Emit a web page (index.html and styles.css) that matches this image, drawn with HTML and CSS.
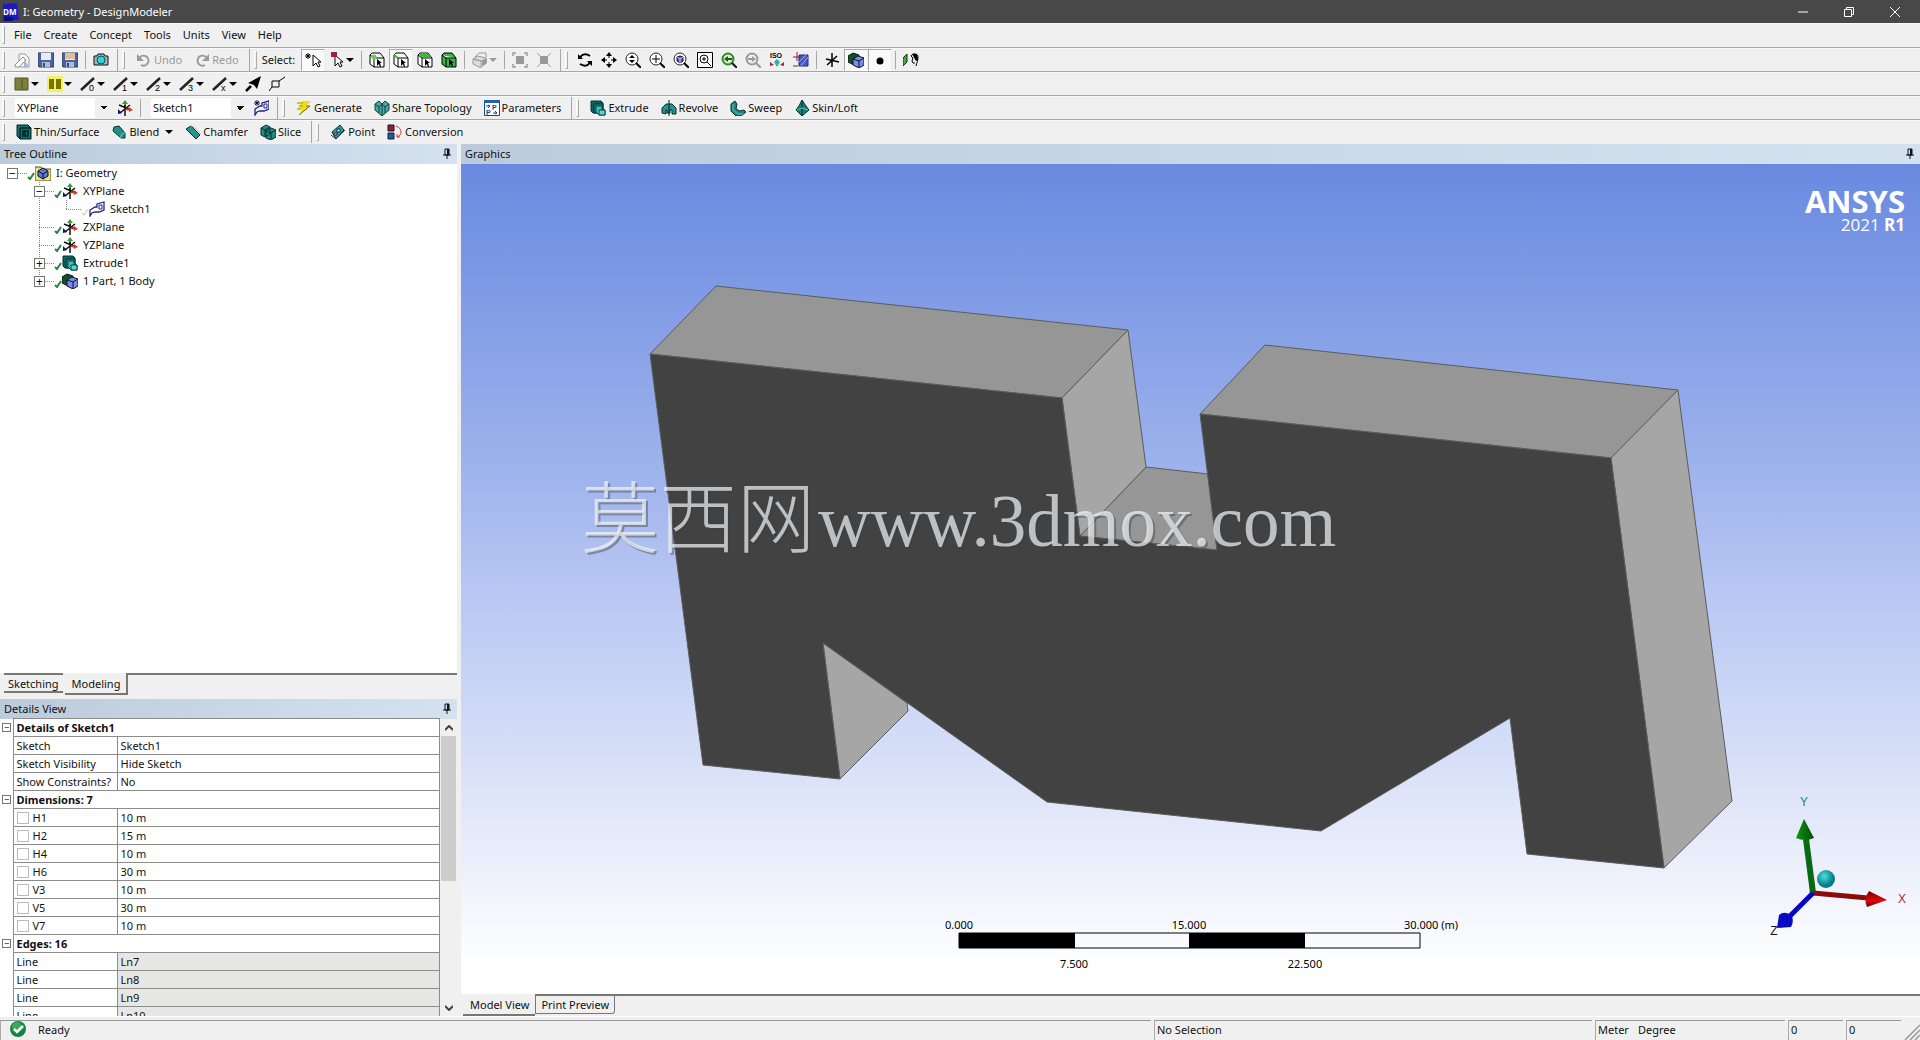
FILE: index.html
```html
<!DOCTYPE html>
<html lang="en">
<head>
<meta charset="utf-8">
<title>I: Geometry - DesignModeler</title>
<link rel="stylesheet" href="styles.css">
</head>
<body>
<svg class="defs" aria-hidden="true">
  <defs>
    <symbol id="arrow" viewBox="0 0 8 4"><path d="M0 0h8L4 4z"/></symbol>
    <symbol id="cursor" viewBox="0 0 16 16"><path d="M6 3v11l3-3 2 4 2-1-2-4h3z" fill="#fff" stroke="#000"/></symbol>
    <symbol id="cube" viewBox="0 0 16 16"><path d="M1 3l4 3h10v9H5l-4-3V3l2-2h8l4 5M5 6v9" stroke="#000"/><path d="M8 7v7l2-2 1 3 1-1-1-3h2z" fill="#000"/></symbol>
    <symbol id="lens" viewBox="0 0 16 16"><circle cx="7" cy="7" r="6" fill="#fff" stroke="#222"/><path d="M11 11l5 5" stroke="#000" stroke-width="2"/></symbol>
    <symbol id="axes" viewBox="0 0 16 16"><path d="M8 8V2" stroke="#2d9a3a" stroke-width="2"/><path d="M8 5v11M2 5l12 5M3 13L13 5" stroke="#111" stroke-width="1.5"/><path d="M9 9l5 1" stroke="#c33" stroke-width="2"/><path d="M8 0l3 4H5z" fill="#3a9c3a"/><path d="M12 7l4 3-4 2z" fill="#c43"/><path d="M1 14V9l4 4z" fill="#116"/></symbol>
    <symbol id="sketch" viewBox="0 0 16 16"><path d="M1 15V9l5-3h2V3l7-2v8l-5 2H6l-3 1z" fill="none" stroke="#22228a" stroke-width="1.3"/><path d="M10 4h3v4h-3z" fill="none" stroke="#22228a"/></symbol>
    <symbol id="extrude" viewBox="0 0 16 16"><path d="M1 1h10l2 2v10H3l-2-2z" fill="#0d6563" stroke="#033"/><path d="M4 4h9v9H4z" fill="#1b8583" stroke="#033"/><path d="M6 6h6v4h3v5H9l-3-3z" fill="#48c1bd" stroke="#044"/><path d="M9 10h6v5H9z" fill="#5fd6d2" stroke="#044"/></symbol>
    <symbol id="body" viewBox="0 0 16 16"><path d="M0 4l5-3 6 2v8l-5 2-6-3z" fill="#174f25" stroke="#021"/><path d="M5 7l5-3 6 2v7l-5 3-6-3z" fill="#7b8de0" stroke="#114"/><path d="M5 7l6 2 5-3M11 9v7" stroke="#114" fill="none"/></symbol>
    <symbol id="check" viewBox="0 0 8 8"><path d="M1 5l2 2 4-6" fill="none" stroke-width="2"/></symbol>
    <symbol id="pin" viewBox="0 0 8 12"><path d="M2 1h4v6H2zM0 7h8M4 7v4" fill="none" stroke="#111"/><path d="M5 1v6" stroke="#111" stroke-width="2"/></symbol>
    <symbol id="line" viewBox="0 0 16 16"><path d="M1 14L14 2" stroke="#222" stroke-width="2.5"/></symbol>
    <symbol id="disk" viewBox="0 0 16 16"><path d="M0 1h16v14H1l-1-2z" fill="#4a639e" stroke="#2b3d6b"/><path d="M3 1h10v7H3z" fill="#e8edf5"/><path d="M4 10h8v5H4z" fill="#aebdd3"/><path d="M5 11h2v4H5z" fill="#334c83"/></symbol>
  </defs>
</svg>

<header class="titlebar">
  <svg class="app-logo" viewBox="0 0 18 18"><path d="M2 1l14-1 2 17-16 1z" fill="#1b1bc4"/><path d="M4 13l9 2-2 3H3z" fill="#0b0b78"/><text x="2" y="12" class="logo-text">DM</text></svg>
  <h1>I: Geometry - DesignModeler</h1>
  <div class="window-buttons">
    <button aria-label="Minimize"><svg viewBox="0 0 10 10"><path d="M0 5h10" stroke="#fff"/></svg></button>
    <button aria-label="Restore"><svg viewBox="0 0 10 10"><path d="M.5 2.500h7v7h-7zM2.500 2.500v-2h7v7h-2" fill="none" stroke="#fff"/></svg></button>
    <button aria-label="Close"><svg viewBox="0 0 10 10"><path d="M0 0l10 10M10 0L0 10" stroke="#fff"/></svg></button>
  </div>
</header>

<nav class="bar menu"><span class="grip"></span>
  <button>File</button><button>Create</button><button>Concept</button><button>Tools</button><button>Units</button><button>View</button><button>Help</button>
</nav>

<div class="bar"><span class="grip"></span>
  <button class="tool" aria-label="Open"><svg viewBox="0 0 16 16"><path d="M5 2h6l4 4v9H5z" fill="#f5f7fa" stroke="#999"/><path d="M1 13l8-8 3 3-7 7H1z" fill="#fff" stroke="#8791a3"/><path d="M10 7l5 8h-5z" fill="#a9b7cb"/></svg></button>
  <button class="tool" aria-label="Save"><svg><use href="#disk"/></svg></button>
  <button class="tool" aria-label="Save as"><svg viewBox="0 0 16 16"><use href="#disk" width="16" height="16"/><path d="M3 2h10M3 4h10M3 6h10" stroke="#e08a3a"/></svg></button>
  <span class="sep"></span>
  <button class="tool" aria-label="Image capture"><svg viewBox="0 0 16 16"><path d="M1 4h3l1-2h6l1 2h3v9H1z" fill="#9fb5b7" stroke="#111"/><circle cx="8" cy="8" r="4" fill="#2ed3db" stroke="#055"/></svg></button>
  <span class="end"></span><span class="grip"></span>
  <button class="tool text" disabled><svg viewBox="0 0 16 16"><path d="M4 5a5 5 0 1 1 1 8" fill="none" stroke="#999" stroke-width="2"/><path d="M1 2v7h7z" fill="#999"/></svg>Undo</button>
  <button class="tool text" disabled><svg viewBox="0 0 16 16"><path d="M12 5a5 5 0 1 0-1 8" fill="none" stroke="#999" stroke-width="2"/><path d="M15 2v7H8z" fill="#999"/></svg>Redo</button>
  <span class="end"></span><span class="grip"></span>
  <span class="caption">Select:</span>
  <button class="tool on" aria-label="New selection"><svg viewBox="0 0 16 16"><path d="M3 1v6M0 4h6M1 2l4 4M5 2L1 6" stroke="#000"/><use href="#cursor" x="2" width="16" height="16"/></svg></button>
  <button class="tool drop" aria-label="Select mode"><svg viewBox="0 0 16 16"><use href="#cursor" width="16" height="16"/><path d="M2 0h6v5H2z" fill="#a01f3c"/></svg><svg class="arrow"><use href="#arrow"/></svg></button>
  <span class="sep"></span>
  <button class="tool" aria-label="Vertices"><svg viewBox="0 0 16 16" fill="#fff"><use href="#cube" width="16" height="16"/><circle cx="5" cy="5" r="2.500" fill="#6c5"/></svg></button>
  <button class="tool on" aria-label="Edges"><svg viewBox="0 0 16 16" fill="#fff"><use href="#cube" width="16" height="16"/><path d="M1 3l4 3" stroke="#3b3" stroke-width="2"/></svg></button>
  <button class="tool" aria-label="Faces"><svg fill="#fff" viewBox="0 0 16 16"><use href="#cube" width="16" height="16"/><path d="M3 2h8l3 3H5L2 3z" fill="#3b3"/></svg></button>
  <button class="tool" aria-label="Bodies"><svg fill="#38b648"><use href="#cube"/></svg></button>
  <span class="sep"></span>
  <button class="tool drop" aria-label="Extend selection" disabled><svg viewBox="0 0 16 16"><path d="M1 7l5-3 8 2-4 3zM1 7v5l8 4V9z" fill="#ddd" stroke="#999"/><path d="M10 9l5-3v5l-5 4z" fill="#999"/><path d="M3 5l4-4h7v4" fill="none" stroke="#999"/></svg><svg class="arrow"><use href="#arrow"/></svg></button>
  <span class="sep"></span>
  <button class="tool" aria-label="Expand" disabled><svg viewBox="0 0 16 16"><path d="M4 4h8v8H4z" fill="#999"/><path d="M1 4V1h3M12 1h3v3M15 12v3h-3M4 15H1v-3" stroke="#999" fill="none" stroke-width="1.500"/></svg></button>
  <button class="tool" aria-label="Shrink" disabled><svg viewBox="0 0 16 16"><path d="M4 4h8v8H4z" fill="#999"/><path d="M1 1l14 14M15 1L1 15" stroke="#999"/></svg></button>
  <span class="end"></span><span class="grip"></span>
  <button class="tool" aria-label="Rotate"><svg viewBox="0 0 16 16" fill="none"><path d="M3 6c2-5 7-4 10-2M13 10c-2 5-7 4-10 2" stroke="#000" stroke-width="2"/><path d="M1 2v5h5zM15 14V9h-5z" fill="#000"/></svg></button>
  <button class="tool" aria-label="Pan"><svg viewBox="0 0 16 16"><path d="M8 2v4M8 10v4M2 8h4M10 8h4" stroke="#000"/><path d="M8 0l3 4H5zM8 16l3-4H5zM0 8l4-3v6zM16 8l-4-3v6z"/></svg></button>
  <button class="tool" aria-label="Zoom"><svg viewBox="0 0 16 16"><use href="#lens" width="16" height="16"/><path d="M7 3l3 3H4zM7 11l3-3H4z"/></svg></button>
  <button class="tool" aria-label="Zoom in"><svg viewBox="0 0 16 16"><use href="#lens" width="16" height="16"/><path d="M7 3v8M3 7h8" stroke="#000"/></svg></button>
  <button class="tool" aria-label="Zoom to body"><svg viewBox="0 0 16 16"><use href="#lens" width="16" height="16"/><path d="M4 5l3-1 3 1v4l-3 2-3-2z" fill="#55a" stroke="#114"/><path d="M4 5l3 2 3-2M7 7v4" stroke="#ccf" fill="none"/></svg></button>
  <button class="tool" aria-label="Zoom to fit"><svg viewBox="0 0 16 16"><path d="M.5.500h15v15H.5z" fill="#fff" stroke="#000"/><circle cx="7" cy="7" r="4" fill="none" stroke="#000"/><path d="M10 10l4 4M5 7h4M7 5v4" stroke="#000"/></svg></button>
  <button class="tool" aria-label="Previous view"><svg viewBox="0 0 16 16"><circle cx="7" cy="7" r="5.500" fill="#d8f0d0" stroke="#2c8a2c" stroke-width="2"/><path d="M3 7l4-3v2h4v2H7v2z" fill="#185f18"/><path d="M11 11l5 5" stroke="#111" stroke-width="2"/></svg></button>
  <button class="tool" aria-label="Next view" disabled><svg viewBox="0 0 16 16"><circle cx="7" cy="7" r="5.500" fill="#eee" stroke="#999" stroke-width="2"/><path d="M11 7L7 4v2H3v2h4v2z" fill="#999"/><path d="M11 11l5 5" stroke="#999" stroke-width="2"/></svg></button>
  <button class="tool" aria-label="Isometric view"><svg viewBox="0 0 16 16"><text x="1" y="6" class="iso">ISO</text><path d="M8 9v5" stroke="#1aa"/><path d="M8 7l3 3-3 5-3-5z" fill="#2ab5a5"/><path d="M1 10v4l4-1zM15 10v4l-4-1z" fill="#a23"/></svg></button>
  <button class="tool" aria-label="Look at"><svg viewBox="0 0 16 16"><path d="M6 3h9v11H6z" fill="#4858c8" stroke="#228"/><path d="M6 10l7-7M8 14l7-9" stroke="#99a8f0"/><path d="M4 0v9M0 5h8M0 14h5" stroke="#822"/></svg></button>
  <span class="sep"></span>
  <button class="tool" aria-label="Display plane"><svg viewBox="0 0 16 16"><path d="M8 1v14M2 7l13 3M3 13L13 4" stroke="#000" stroke-width="1.500"/></svg></button>
  <button class="tool on" aria-label="Display model"><svg><use href="#body"/></svg></button>
  <button class="tool on" aria-label="Display points"><svg viewBox="0 0 16 16"><circle cx="8" cy="9" r="3.500"/></svg></button>
  <span class="sep"></span>
  <button class="tool" aria-label="Look at face"><svg viewBox="0 0 16 16"><path d="M0 6l4-4v8l-4 4z" fill="#4a4" stroke="#131"/><path d="M8 4c1-3 7-3 7 1s-1 5-2 9M8 4l2 2-1 3 1 2h2" fill="none" stroke="#000"/><path d="M9 2h5l1 6-2 1z"/></svg></button>
</div>

<div class="bar"><span class="grip"></span>
  <button class="tool drop wide" aria-label="Face color"><svg viewBox="0 0 16 16"><path d="M1 2h13v12H1z" fill="#7f7f3f" stroke="#555520"/><path d="M8 2v12" stroke="#555520"/></svg><svg class="arrow"><use href="#arrow"/></svg></button>
  <button class="tool drop wide" aria-label="Edge color"><svg viewBox="0 0 16 16"><path d="M0 0h16v16H0z" fill="#f2f065"/><path d="M2 3h5v10H2zM9 3h5v10H9z" fill="#7a7400"/></svg><svg class="arrow"><use href="#arrow"/></svg></button>
  <button class="tool drop wide" aria-label="Edge joints 0"><svg viewBox="0 0 16 16"><use href="#line" width="16" height="16"/><text x="9" y="15" class="mini">0</text></svg><svg class="arrow"><use href="#arrow"/></svg></button>
  <button class="tool drop wide" aria-label="Edge joints 1"><svg viewBox="0 0 16 16"><use href="#line" width="16" height="16"/><text x="9" y="15" class="mini">1</text></svg><svg class="arrow"><use href="#arrow"/></svg></button>
  <button class="tool drop wide" aria-label="Edge joints 2"><svg viewBox="0 0 16 16"><use href="#line" width="16" height="16"/><text x="9" y="15" class="mini">2</text></svg><svg class="arrow"><use href="#arrow"/></svg></button>
  <button class="tool drop wide" aria-label="Edge joints 3"><svg viewBox="0 0 16 16"><use href="#line" width="16" height="16"/><text x="9" y="15" class="mini">3</text></svg><svg class="arrow"><use href="#arrow"/></svg></button>
  <button class="tool drop wide" aria-label="Edge joints X"><svg viewBox="0 0 16 16"><use href="#line" width="16" height="16"/><text x="9" y="15" class="mini">x</text></svg><svg class="arrow"><use href="#arrow"/></svg></button>
  <button class="tool" aria-label="Edge direction"><svg viewBox="0 0 16 16"><path d="M1 15l5-5" stroke="#000" stroke-width="2.500"/><path d="M16 0l-4 13-3-4-6-2z"/></svg></button>
  <button class="tool" aria-label="Vertices display"><svg viewBox="0 0 16 16"><path d="M3 5h7v6H3zM10 5l6-4M3 11l-3 4" fill="none" stroke="#000"/></svg></button>
</div>

<div class="bar"><span class="grip"></span>
  <select class="combo" aria-label="Plane"><option>XYPlane</option></select>
  <button class="tool" aria-label="New plane"><svg><use href="#axes"/></svg></button>
  <span class="sep"></span>
  <select class="combo second" aria-label="Sketch"><option>Sketch1</option></select>
  <button class="tool" aria-label="New sketch"><svg viewBox="0 0 16 16"><use href="#sketch" x="1" width="16" height="16"/><path d="M4 0v6M1 3h6M2 1l4 4M6 1L2 5" stroke="#113"/></svg></button>
  <span class="end"></span><span class="grip"></span>
  <button class="tool text"><svg viewBox="0 0 16 16"><path d="M6 1h9l-5 5h4L3 15l3-6H2z" fill="#f0dc1e"/><path d="M1 3h6M3 6h4M1 9h4" stroke="#c7b400" stroke-width="1.500"/><path d="M10 6h4L3 15" fill="none" stroke="#776b00"/></svg>Generate</button>
  <button class="tool text"><svg viewBox="0 0 16 16"><path d="M1 4l4-3 3 3 3-3 4 3v6l-7 6-7-6z" fill="#4aa7a2" stroke="#144"/><path d="M1 4l4 3 3-3 3 3 4-3M5 7v6M11 7v6M8 4v12" fill="none" stroke="#144"/></svg>Share Topology</button>
  <button class="tool text"><svg viewBox="0 0 16 16"><path d="M.5.500h15v15H.5z" fill="#fff" stroke="#124a91"/><path d="M0 0h16v3H0z" fill="#2561a8"/><path d="M2 6h4M4 5l2 1-2 2M9 13h4M11 11l2 2-2 1" stroke="#124a91" fill="none"/><text x="8" y="10" class="param">P</text><text x="2" y="15" class="param">P</text></svg>Parameters</button>
  <span class="end"></span><span class="grip"></span>
  <button class="tool text"><svg><use href="#extrude"/></svg>Extrude</button>
  <button class="tool text"><svg viewBox="0 0 16 16"><path d="M1 13V8l4-4h6l4 4v6h-4v-4H9v3H6v-3H5v4z" fill="#29938b" stroke="#033"/><path d="M8 0v16" stroke="#022"/></svg>Revolve</button>
  <button class="tool text"><svg viewBox="0 0 16 16"><path d="M1 4l4-3 2 3-1 5 4 2 4-1 2 2-5 4H6l-5-5z" fill="#23867d" stroke="#033"/><path d="M3 4v6l5 4h5" fill="none" stroke="#60c0b5"/></svg>Sweep</button>
  <button class="tool text"><svg viewBox="0 0 16 16"><path d="M8 0l4 6 3 4-7 6-6-6 3-4z" fill="#178074" stroke="#033"/><path d="M8 1v15" stroke="#033"/><path d="M3 10l5-2 6 2" stroke="#6bc0af" fill="none"/></svg>Skin/Loft</button>
</div>

<div class="bar"><span class="grip"></span>
  <button class="tool text"><svg viewBox="0 0 16 16"><path d="M1 1h11l3 3v11H4l-3-3z" fill="#117471" stroke="#022"/><path d="M4 4h11M4 4v11M7 7h5v5H7zM9 7v5" fill="none" stroke="#022" stroke-width="1.500"/></svg>Thin/Surface</button>
  <button class="tool text"><svg viewBox="0 0 16 16"><path d="M3 3l5-1 6 7v5h-4L2 7z" fill="#268f84" stroke="#033"/><path d="M10 15c-1-3 1-6 4-6" stroke="#8cc" fill="none"/></svg>Blend<svg class="arrow"><use href="#arrow"/></svg></button>
  <button class="tool text"><svg viewBox="0 0 16 16"><path d="M1 5l5-3 9 9-4 4z" fill="#279588" stroke="#033"/><path d="M6 2l3 1 7 7" stroke="#8cc" fill="none"/></svg>Chamfer</button>
  <button class="tool text"><svg viewBox="0 0 16 16"><path d="M1 4l5-3 4 2v7l-5 3-4-2zM6 7l5-3 5 2v7l-5 3-5-2z" fill="#258b80" stroke="#033"/><path d="M1 4l4 2 5-3M5 6v6M6 7l5 2 5-3M11 9v6" fill="none" stroke="#033"/></svg>Slice</button>
  <span class="end"></span><span class="grip"></span>
  <button class="tool text"><svg viewBox="0 0 16 16"><path d="M2 8l8-7 4 5-8 9z" fill="#3b9b92" stroke="#033"/><path d="M1 11l5 4 9-9" stroke="#235" fill="none"/><path d="M7 5h3v3H7zM4 9h3v2H4z" fill="#fff" stroke="#124"/></svg>Point</button>
  <button class="tool text"><svg viewBox="0 0 16 16"><path d="M1 1h6v6H1z" fill="#8b1f37" stroke="#312"/><path d="M1 9h6v6H1z" fill="#215d92" stroke="#124"/><path d="M9 2c6 2 7 9 1 11M10 10v3h3" fill="none" stroke="#d33"/></svg>Conversion</button>
</div>

<main class="workspace">
  <aside class="left">
    <h2 class="panel-title">Tree Outline<svg class="pin"><use href="#pin"/></svg></h2>
    <ul class="tree">
      <li><span class="branch root"><button class="expander" aria-label="Collapse">−</button></span><svg class="check"><use href="#check"/></svg><svg class="icon" viewBox="0 0 16 16"><path d="M0 2h6l1 2h9v12H0z" fill="#e9e18b" stroke="#554e10"/><path d="M3 6l5-3 5 3v5l-5 3-5-3z" fill="#6379c9" stroke="#113"/><path d="M3 6l5 3 5-3M8 9v5" stroke="#113" fill="none"/></svg>I: Geometry</li>
      <li><span class="indent"></span><span class="branch"><button class="expander" aria-label="Collapse">−</button></span><svg class="check"><use href="#check"/></svg><svg class="icon"><use href="#axes"/></svg>XYPlane</li>
      <li><span class="indent"></span><span class="branch pass"></span><span class="branch last"></span><svg class="check pale"><use href="#check"/></svg><svg class="icon"><use href="#sketch"/></svg>Sketch1</li>
      <li><span class="indent"></span><span class="branch"></span><svg class="check"><use href="#check"/></svg><svg class="icon"><use href="#axes"/></svg>ZXPlane</li>
      <li><span class="indent"></span><span class="branch"></span><svg class="check"><use href="#check"/></svg><svg class="icon"><use href="#axes"/></svg>YZPlane</li>
      <li><span class="indent"></span><span class="branch"><button class="expander" aria-label="Expand">+</button></span><svg class="check"><use href="#check"/></svg><svg class="icon"><use href="#extrude"/></svg>Extrude1</li>
      <li><span class="indent"></span><span class="branch last"><button class="expander" aria-label="Expand">+</button></span><svg class="check"><use href="#check"/></svg><svg class="icon"><use href="#body"/></svg>1 Part, 1 Body</li>
    </ul>
    <div class="tabs"><button class="tab first">Sketching</button><button class="tab active">Modeling</button><span class="tab-rule"></span></div>
    <h2 class="panel-title">Details View<svg class="pin"><use href="#pin"/></svg></h2>
    <div class="details">
      <div class="grid-clip">
      <table>
        <colgroup><col class="gutter"><col class="name"><col></colgroup>
        <tbody>
          <tr class="group"><td><button class="expander small" aria-label="Collapse">−</button></td><th colspan="2">Details of Sketch1</th></tr>
          <tr><td></td><td>Sketch</td><td>Sketch1</td></tr>
          <tr><td></td><td>Sketch Visibility</td><td>Hide Sketch</td></tr>
          <tr><td></td><td>Show Constraints?</td><td>No</td></tr>
          <tr class="group"><td><button class="expander small" aria-label="Collapse">−</button></td><th colspan="2">Dimensions: 7</th></tr>
          <tr><td></td><td><label><input type="checkbox">H1</label></td><td>10 m</td></tr>
          <tr><td></td><td><label><input type="checkbox">H2</label></td><td>15 m</td></tr>
          <tr><td></td><td><label><input type="checkbox">H4</label></td><td>10 m</td></tr>
          <tr><td></td><td><label><input type="checkbox">H6</label></td><td>30 m</td></tr>
          <tr><td></td><td><label><input type="checkbox">V3</label></td><td>10 m</td></tr>
          <tr><td></td><td><label><input type="checkbox">V5</label></td><td>30 m</td></tr>
          <tr><td></td><td><label><input type="checkbox">V7</label></td><td>10 m</td></tr>
          <tr class="group"><td><button class="expander small" aria-label="Collapse">−</button></td><th colspan="2">Edges: 16</th></tr>
          <tr class="fixed"><td></td><td>Line</td><td>Ln7</td></tr>
          <tr class="fixed"><td></td><td>Line</td><td>Ln8</td></tr>
          <tr class="fixed"><td></td><td>Line</td><td>Ln9</td></tr>
          <tr class="fixed"><td></td><td>Line</td><td>Ln10</td></tr>
        </tbody>
      </table>
      </div>
      <div class="scrollbar">
        <button aria-label="Scroll up"><svg viewBox="0 0 8 6"><path d="M0 5l4-4 4 4" fill="none" stroke="#444" stroke-width="2"/></svg></button>
        <div class="track"><div class="thumb"></div></div>
        <button aria-label="Scroll down"><svg viewBox="0 0 8 6"><path d="M0 1l4 4 4-4" fill="none" stroke="#444" stroke-width="2"/></svg></button>
      </div>
    </div>
  </aside>

  <section class="graphics">
    <h2 class="panel-title wide-title">Graphics<svg class="pin"><use href="#pin"/></svg></h2>
    <div class="viewport">
      <svg class="scene" viewBox="461 164 1459 830" preserveAspectRatio="xMidYMid slice">
        <defs>
          <radialGradient id="ball" cx=".4" cy=".35"><stop offset="0" stop-color="#4fe0e0"/><stop offset="1" stop-color="#077f86"/></radialGradient>
          <linearGradient id="green"><stop offset="0" stop-color="#0a9a12"/><stop offset="1" stop-color="#054a08"/></linearGradient>
          <linearGradient id="red" x2="0" y2="1"><stop offset="0" stop-color="#700"/><stop offset=".6" stop-color="#e00808"/><stop offset="1" stop-color="#600"/></linearGradient>
        </defs>
        <g class="edges">
          <path class="top" d="M650 354L716 286L1128 330L1062 398z"/>
          <path class="top" d="M1200 414L1265 345L1678 390L1612 458z"/>
          <path class="top" d="M1080 536L1146 467L1208 474L1217 550z"/>
          <path class="side" d="M1062 398L1128 330L1146 467L1080 536z"/>
          <path class="side" d="M1611 458L1678 390L1732 801L1664 868z"/>
          <path class="side" d="M823 643L907 703L908 711L840 779z"/>
          <path class="front" d="M650 354L1062 398L1080 536L1217 550L1200 414L1611 458L1664 868L1527 854L1510 718L1321 831L1047 802L823 643L840 779L703 765z"/>
        </g>
        <g class="watermark"><text class="cjk" x="581" y="547">莫西网</text><text class="latin" x="818" y="546">www.3dmox.com</text></g>
        <text class="brand" x="1905" y="213">ANSYS</text>
        <text class="release" x="1905" y="231">2021 <tspan class="bold">R1</tspan></text>
        <g>
          <path d="M959 933h461v15H959z" fill="none" stroke="#000"/>
          <path d="M959 933h116v15H959zM1189 933h116v15h-116z"/>
          <g class="scale"><text x="959" y="929">0.000</text><text x="1189" y="929">15.000</text><text x="1431" y="929">30.000 (m)</text><text x="1074" y="968">7.500</text><text x="1305" y="968">22.500</text></g>
        </g>
        <g>
          <path d="M1813 893L1806 839" stroke="#0a6a14" stroke-width="6"/>
          <path d="M1804 819L1796 838Q1805 842 1814 838z" fill="url(#green)"/>
          <path d="M1813 893L1868 898" stroke="#8d0b0b" stroke-width="5"/>
          <path d="M1887 900L1869 891Q1863 899 1867 907z" fill="url(#red)"/>
          <path d="M1813 893L1788 918" stroke="#0808c0" stroke-width="5"/>
          <path d="M1777 928L1779 915Q1785 910 1792 916Q1794 923 1791 927z" fill="#0a0ac4"/>
          <circle cx="1826" cy="879" r="9" fill="url(#ball)"/>
          <text class="axis y" x="1804" y="806">Y</text><text class="axis x" x="1902" y="903">X</text><text class="axis z" x="1774" y="935">Z</text>
        </g>
      </svg>
    </div>
    <div class="tabs view-tabs"><button class="tab active">Model View</button><button class="tab boxed">Print Preview</button><span class="tab-rule"></span></div>
  </section>
</main>

<footer class="status">
  <div class="cell ready"><svg viewBox="0 0 16 16"><circle cx="8" cy="8" r="8" fill="#178341"/><circle cx="7" cy="6" r="5" fill="#36aa5c"/><path d="M4 8l3 3 6-6" fill="none" stroke="#fff" stroke-width="2.500"/></svg>Ready</div>
  <div class="cell selection">No Selection</div>
  <div class="cell units"><span>Meter</span><span>Degree</span></div>
  <div class="cell value">0</div>
  <div class="cell value">0</div>
  <svg class="resize" viewBox="0 0 16 16"><path d="M1 16L16 1M6 16L16 6M11 16l5-5" stroke="#999" stroke-width="1.500"/></svg>
</footer>
</body>
</html>
```
FILE: styles.css
```css
* { box-sizing: border-box; }
body {
  margin: 0;
  height: 100vh;
  display: flex;
  flex-direction: column;
  overflow: hidden;
  background: #f0f0f0;
  color: #111;
  font: 11px/18px "Noto Sans", "Open Sans", sans-serif;
}
button { font: inherit; color: inherit; border: 0; padding: 0; margin: 0; background: none; }
h1, h2 { margin: 0; font-size: inherit; font-weight: normal; }
svg { flex: none; }
.defs { position: absolute; width: 0; height: 0; }

.titlebar { flex: none; height: 23px; display: flex; align-items: center; gap: 4px; background: #484848; color: #fff; padding-left: 1px; }
.app-logo { width: 18px; height: 18px; }
.logo-text { font: bold 8px "Open Sans", sans-serif; fill: #fff; }
.window-buttons { margin-left: auto; padding-right: 2px; display: flex; }
.window-buttons button { width: 46px; height: 20px; display: flex; align-items: center; justify-content: center; }
.window-buttons svg { width: 10px; height: 10px; }

.bar { flex: none; height: 24px; display: flex; align-items: center; border-bottom: 1px solid #a6a6a6; box-shadow: inset 0 1px #fafafa; }
.bar:nth-of-type(4) { border-bottom-color: #f0f0f0; }
.grip { flex: none; width: 3px; height: 18px; margin: 0 5px 0 2px; border: 1px solid #aaa; border-top-color: #fff; border-left-color: #fff; }
.sep { flex: none; width: 1px; height: 18px; background: #a6a6a6; margin: 0 3px; }
.end { flex: none; width: 1px; height: 22px; background: #a6a6a6; margin: 0 2px 0 4px; }
.menu { height: 25px; gap: 12px; }
.menu .grip { margin-right: -3px; }
.tool { flex: none; width: 24px; height: 22px; display: flex; align-items: center; justify-content: center; }
.tool > svg { width: 16px; height: 16px; }
.tool > .arrow { width: 8px; height: 4px; }
.tool.drop { width: 33px; gap: 1px; }
.tool.text { width: auto; padding: 0 6px; gap: 2px; }
.tool.text .arrow { margin-left: 4px; }
.tool:disabled { color: #999; fill: #999; }
.tool.on { background: #f9f9f9; border: 1px solid #aaa; border-right-color: #eee; border-bottom-color: #fff; }
.caption { padding-right: 6px; }
.iso { font: bold 7px "Liberation Sans", sans-serif; }
.mini { font: 9px "Liberation Sans", sans-serif; }
.param { font: bold 7px "Liberation Sans", sans-serif; fill: #124a91; }
.combo {
  appearance: none; width: 96px; height: 20px; margin: 0 2px 0 5px; padding: 0 0 0 2px; border: 0;
  font: inherit; line-height: 20px; color: inherit;
  background: conic-gradient(from -45deg at 50% 100%, #111 90deg, transparent 0) 85px 8px / 8px 4px no-repeat,
    linear-gradient(90deg, #fff 80px, #f0f0f0 80px);
}
.combo.second { margin-left: 7px; }

.workspace { flex: 1; min-height: 0; display: grid; grid-template-columns: 457px 1fr; gap: 4px; }
.left, .graphics { min-width: 0; min-height: 0; display: flex; flex-direction: column; }
.panel-title {
  flex: none; height: 20px; padding: 0 6px 0 4px; display: flex; align-items: center; justify-content: space-between;
  background: linear-gradient(90deg, #bccbdb, #d4e2f0);
}
.pin { width: 8px; height: 12px; }

.tree { flex: 12 1 0; min-height: 0; margin: 0; padding: 0; list-style: none; background: #fff; overflow: hidden; }
.tree li { height: 18px; display: flex; align-items: center; }
.indent, .branch { flex: none; width: 27px; height: 18px; }
.branch {
  display: flex; align-items: center; padding-left: 7px;
  background: repeating-linear-gradient(90deg, #888 0 1px, transparent 1px 2px) 12px 9px / 15px 1px no-repeat,
    repeating-linear-gradient(#888 0 1px, transparent 1px 2px) 12px 0 / 1px 18px no-repeat;
}
.branch.root { background-size: 15px 1px, 0 0; }
.branch.pass { background-size: 0 0, 1px 18px; }
.branch.last { background-size: 15px 1px, 1px 9px; }
.expander { width: 11px; height: 11px; border: 1px solid #777; background: #fff; display: flex; align-items: center; justify-content: center; font-size: 12px; line-height: 9px; }
.expander.small { width: 9px; height: 9px; font-size: 9px; line-height: 7px; margin-left: 2px; }
.check { width: 8px; height: 8px; margin-top: 6px; stroke: #24873a; }
.check.pale { stroke: #ddd; }
.icon { width: 16px; height: 16px; margin-right: 5px; }

.tabs { flex: none; height: 26px; display: flex; align-items: flex-start; }
.tab { flex: none; height: 20px; padding: 0 4px; line-height: 18px; border-top: 2px solid #777; border-bottom: 2px solid #777; }
.tab.first { margin-left: 4px; }
.tab.active { height: 22px; border-top: 0; border-right: 2px solid #777; padding: 2px 6px 0 7px; margin-left: 2px; }
.tab-rule { flex: 1; height: 2px; background: #777; }
.view-tabs { height: 22px; }
.view-tabs .tab.active { border-right: 0; }
.tab.boxed { border: 1px solid #777; border-top-width: 2px; border-radius: 0 0 3px 0; padding: 0 5px; }

.details { flex: 7 1 0; min-height: 0; display: flex; background: #fff; }
.grid-clip { flex: 1; overflow: hidden; margin-top: -1px; }
table { width: 100%; table-layout: fixed; border-collapse: collapse; }
.gutter { width: 13px; }
.name { width: 104px; }
tr { height: 18px; }
td, th { padding: 0 3px; line-height: 17px; height: 18px; border: 1px solid #8c8c8c; text-align: left; white-space: nowrap; }
td:first-child { border: 0; padding: 0; }
.fixed td:last-child { background: #e6e6e4; }
label { display: flex; align-items: center; gap: 4px; }
input { appearance: none; width: 12px; height: 12px; margin: 0; border: 1px solid #bbb; background: #fff; }
.scrollbar { flex: none; width: 17px; display: flex; flex-direction: column; background: #f0f0f0; }
.scrollbar button { height: 17px; display: flex; align-items: center; justify-content: center; }
.scrollbar svg { width: 8px; height: 6px; }
.track { flex: 1; padding: 0 1px; }
.thumb { height: 55%; background: #cdcdcd; }

.viewport { flex: 1; min-height: 0; background: linear-gradient(#698ae0, #9db2ec 36%, #bccaf4 54%, #dee5f9 76%, #fff 97%); }
.scene { display: block; width: 100%; height: 100%; }
.edges { stroke: #5c5c5c; stroke-width: 1; }
.top { fill: #969696; }
.side { fill: #a6a6a6; }
.front { fill: #424242; }
.watermark { fill: rgba(244, 246, 250, .7); filter: drop-shadow(2px 2px 0 rgba(60, 60, 60, .6)); }
.cjk { font: 300 78px "Noto Sans CJK SC", sans-serif; }
.latin { font: 73px "Liberation Serif", serif; }
.brand { font: bold 31px "Open Sans", sans-serif; fill: #fff; text-anchor: end; }
.release { font: 17px "Open Sans", sans-serif; fill: #fff; text-anchor: end; }
.bold { font-weight: bold; }
.scale { font-size: 11px; text-anchor: middle; }
.axis { font: 12px "Liberation Sans", sans-serif; text-anchor: middle; }
.axis.x { fill: #b0264a; }
.axis.y { fill: #2c8456; }
.axis.z { fill: #113; }

.status { flex: none; height: 24px; display: flex; padding-top: 3px; gap: 3px; border-top: 1px solid #fff; line-height: 17px; }
.cell { flex: none; padding-left: 2px; border-top: 1px solid #999; border-left: 1px solid #aaa; }
.ready { flex: 1; display: flex; align-items: flex-start; gap: 12px; padding-left: 9px; }
.ready svg { width: 16px; height: 16px; }
.selection { width: 438px; }
.units { width: 190px; display: flex; gap: 9px; }
.value { width: 55px; }
.resize { width: 16px; height: 16px; align-self: flex-end; }
```
